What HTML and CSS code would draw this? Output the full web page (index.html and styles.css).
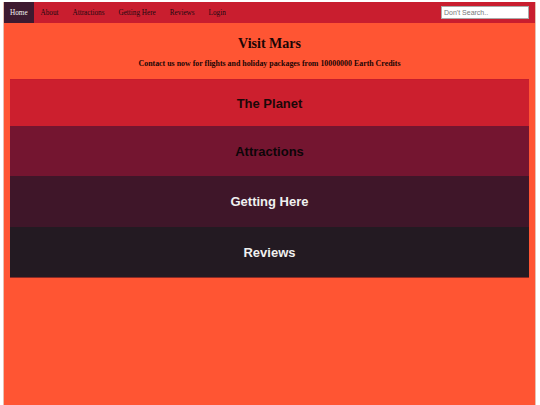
FILE: index.html
```html
<!DOCTYPE html>
<html>
<head>
<meta charset="utf-8">
<link rel="stylesheet" href="styles.css">
</head>
<body>
<div class="page">
  <nav class="topnav">
    <a class="navlink active">Home</a>
    <a class="navlink">About</a>
    <a class="navlink">Attractions</a>
    <a class="navlink">Getting Here</a>
    <a class="navlink">Reviews</a>
    <a class="navlink">Login</a>
    <input class="search" type="text" placeholder="Don't Search..">
  </nav>
  <header class="hero">
    <h1 class="title">Visit Mars</h1>
    <p class="subtitle">Contact us now for flights and holiday packages from 10000000 Earth Credits</p>
  </header>
  <main class="sections">
    <section class="block planet"><h2>The Planet</h2></section>
    <section class="block attractions"><h2>Attractions</h2></section>
    <section class="block getting"><h2>Getting Here</h2></section>
    <section class="block reviews"><h2>Reviews</h2></section>
  </main>
</div>
</body>
</html>
```

FILE: styles.css
```css
html, body {
  margin: 0;
  padding: 0;
  background: #ffffff;
}
body {
  padding: 2px 4px 0 3px;
  height: 405px;
  box-sizing: border-box;
  overflow: hidden;
}
.page {
  background: #ff5533;
  border-left: 1px solid #e8c0b0;
  border-right: 1px solid #e8c0b0;
  height: 403px;
  box-sizing: border-box;
}
.topnav {
  display: flex;
  align-items: center;
  height: 21px;
  background: #c91e2f;
  font-family: "Liberation Serif", serif;
  font-size: 7.2px;
}
.navlink {
  display: flex;
  align-items: center;
  height: 100%;
  padding: 0 7px;
  color: #1a0a10;
}
.navlink.active {
  background: #3e1a30;
  color: #f2f2f2;
  padding: 0 6px;
}
.search {
  margin-left: auto;
  margin-right: 6px;
  width: 88px;
  height: 13px;
  box-sizing: border-box;
  border: 1px solid #aaaaaa;
  padding: 0 2px;
  font-family: "Liberation Sans", sans-serif;
  font-size: 7px;
  background: #fff;
}
.search::placeholder {
  color: #777;
}
.hero {
  text-align: center;
  font-family: "Liberation Serif", serif;
  color: #1a0505;
  padding-top: 13px;
}
.title {
  margin: 0;
  font-size: 14px;
  line-height: 16px;
  font-weight: bold;
}
.subtitle {
  margin: 7px 0 0;
  font-size: 7.9px;
  line-height: 10px;
  font-weight: bold;
}
.sections {
  margin: 10px 6px 0 6px;
  display: flex;
  flex-direction: column;
}
.block {
  height: 50px;
  display: flex;
  align-items: center;
  justify-content: center;
  font-family: "Liberation Sans", sans-serif;
}
.block h2 {
  margin: 0;
  font-size: 13px;
  font-weight: bold;
}
.planet {
  background: #cc1f2e;
  color: #1a0808;
  height: 46px;
  border-top: 1px solid #c71c2c;
}
.attractions {
  background: #741530;
  color: #0d0508;
}
.getting {
  background: #3f1629;
  color: #f0f0f0;
  height: 51px;
}
.reviews {
  background: #231a22;
  color: #f0f0f0;
  border-bottom: 1px solid #8a2a26;
}
```
